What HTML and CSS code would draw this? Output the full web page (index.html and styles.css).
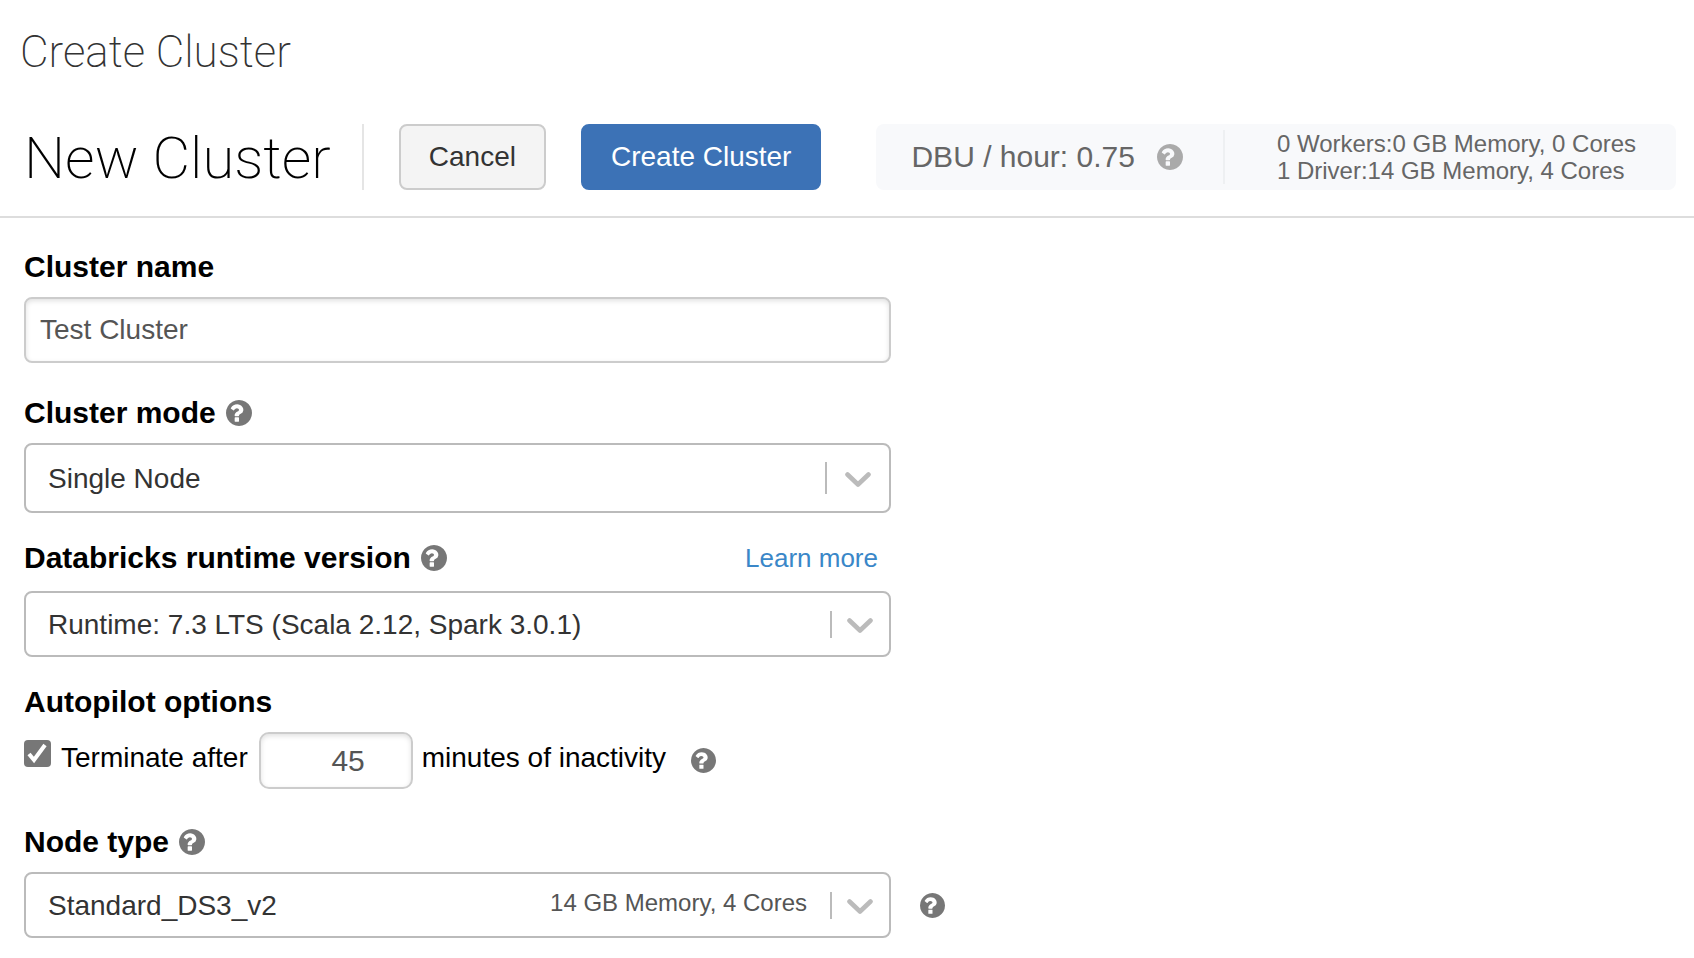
FILE: index.html
```html
<!DOCTYPE html>
<html lang="en">
<head>
<meta charset="utf-8">
<title>Create Cluster</title>
<link rel="stylesheet" href="styles.css">
</head>
<body>
<svg class="sprite" aria-hidden="true">
  <symbol id="question" viewBox="128 128 1536 1536"><path d="M896 1376v-192q0-14-9-23t-23-9h-192q-14 0-23 9t-9 23v192q0 14 9 23t23 9h192q14 0 23-9t9-23zm256-672q0-88-55.500-163t-138.500-116-170-41q-243 0-371 213-15 24 8 42l132 100q7 6 19 6 16 0 25-12 53-68 86-92 34-24 86-24 48 0 85.500 26t37.500 59q0 38-20 61t-68 45q-63 28-115.500 86.500t-52.500 125.500v36q0 14 9 23t23 9h192q14 0 23-9t9-23q0-19 21.500-49.500t54.500-49.500q32-18 49-28.500t46-35 44.500-48 28-60.500 12.500-81zm512 192q0 209-103 385.500t-279.500 279.500-385.500 103-385.500-103-279.500-279.500-103-385.500 103-385.500 279.500-279.500 385.500-103 385.500 103 279.500 279.500 103 385.500z"/></symbol>
  <symbol id="chevron" viewBox="0 0 26 16"><path d="M2.500 2.500 13 12.500 23.500 2.500" fill="none" stroke="currentColor" stroke-width="4.600" stroke-linecap="round" stroke-linejoin="round"/></symbol>
</svg>
<h1 class="page-title">Create Cluster</h1>
<header class="toolbar">
  <h2 class="toolbar-title">New Cluster</h2>
  <div class="actions">
    <button class="button" type="button">Cancel</button>
    <button class="button button-primary" type="submit" form="cluster-form">Create Cluster</button>
  </div>
  <div class="usage">
    <div class="usage-rate">DBU / hour: 0.75 <svg class="help help-light"><use href="#question"/></svg></div>
    <div class="usage-detail">0 Workers:0 GB Memory, 0 Cores<br>1 Driver:14 GB Memory, 4 Cores</div>
  </div>
</header>
<form class="cluster-form" id="cluster-form">
  <div class="field">
    <div class="field-head"><label for="name">Cluster name</label></div>
    <input class="text-input" id="name" type="text" value="Test Cluster">
  </div>
  <div class="field">
    <div class="field-head"><label for="mode">Cluster mode</label><svg class="help"><use href="#question"/></svg></div>
    <div class="select select-tall">
      <select id="mode"><option>Single Node</option></select>
      <div class="select-end"><svg class="chevron"><use href="#chevron"/></svg></div>
    </div>
  </div>
  <div class="field field-close">
    <div class="field-head field-head-loose"><label for="runtime">Databricks runtime version</label><svg class="help"><use href="#question"/></svg><a class="learn-more" href="#">Learn more</a></div>
    <div class="select">
      <select id="runtime"><option>Runtime: 7.3 LTS (Scala 2.12, Spark 3.0.1)</option></select>
      <div class="select-end"><svg class="chevron"><use href="#chevron"/></svg></div>
    </div>
  </div>
  <div class="field field-close">
    <div class="field-head">Autopilot options</div>
    <div class="autopilot">
      <input class="checkbox" id="terminate" type="checkbox" checked>
      <label for="terminate">Terminate after</label>
      <input class="text-input minutes-input" id="minutes" type="text" value="45">
      <label for="minutes">minutes of inactivity</label>
      <svg class="help help-small"><use href="#question"/></svg>
    </div>
  </div>
  <div class="field field-apart">
    <div class="field-head"><label for="node">Node type</label><svg class="help"><use href="#question"/></svg></div>
    <div class="node-row">
      <div class="select">
        <select id="node"><option>Standard_DS3_v2</option></select>
        <div class="select-end"><span class="select-note">14 GB Memory, 4 Cores</span><svg class="chevron"><use href="#chevron"/></svg></div>
      </div>
      <svg class="help help-small"><use href="#question"/></svg>
    </div>
  </div>
</form>
</body>
</html>
```
FILE: styles.css
```css
* { box-sizing: border-box; }
body {
  margin: 0;
  padding-bottom: 16px;
  background: #fff;
  color: #000;
  font: 28px/36px "Liberation Sans", Arial, sans-serif;
}
.sprite { position: absolute; width: 0; height: 0; }
input, select, button { font: inherit; }

.page-title {
  margin: 0;
  padding: 24px 20px 44px;
  color: #333;
  font: 200 44px/56px Roboto, "Liberation Sans", sans-serif;
}
.toolbar {
  display: flex;
  align-items: center;
  padding: 0 18px 26px 24px;
  border-bottom: 2px solid #ddd;
}
.toolbar-title {
  margin: 0;
  padding: 2px 31px 0 0;
  white-space: nowrap;
  font: 200 58px/64px Roboto, "Liberation Sans", sans-serif;
}
.actions {
  display: flex;
  gap: 35px;
  padding-left: 35px;
  border-left: 2px solid #e5e5e5;
}
.button {
  height: 66px;
  padding: 0 28px;
  border: 2px solid #ccc;
  border-radius: 8px;
  background: #f4f4f4;
  color: #333;
  white-space: nowrap;
}
.button-primary { border-color: #3c72b6; background: #3c72b6; color: #fff; }
.usage {
  flex: 1;
  display: flex;
  align-items: center;
  height: 66px;
  margin-left: 55px;
  border-radius: 8px;
  background: #f8f9fb;
  color: #666;
  white-space: nowrap;
}
.usage-rate {
  display: flex;
  align-items: center;
  gap: 22px;
  padding: 0 40px 0 35px;
  font-size: 30px;
  line-height: 54px;
}
.usage-detail {
  padding: 0 24px 0 52px;
  border-left: 2px solid #eef0f2;
  font-size: 24px;
  line-height: 27px;
}
.help { flex: none; width: 26px; height: 26px; fill: #777; }
.help-light { fill: #aaa; }
.help-small { width: 25px; height: 25px; }

.cluster-form { max-width: 891px; padding: 31px 0 0 24px; }
.field + .field { margin-top: 32px; }
.field + .field-close { margin-top: 27px; }
.field + .field-apart { margin-top: 35px; }
.field-head {
  display: flex;
  align-items: center;
  gap: 10px;
  margin-bottom: 12px;
  font-size: 30px;
  font-weight: bold;
}
.field-head-loose { margin-bottom: 15px; }
.learn-more {
  margin-left: auto;
  padding-right: 13px;
  color: #3a87c8;
  font-size: 26px;
  font-weight: normal;
  text-decoration: none;
}
.text-input {
  display: block;
  width: 100%;
  height: 66px;
  padding: 0 14px;
  border: 2px solid #ccc;
  border-radius: 8px;
  background: #fff;
  box-shadow: inset 0 2px 5px rgba(0, 0, 0, .12);
  color: #555;
}
.select { position: relative; width: 100%; }
.select select {
  display: block;
  width: 100%;
  height: 66px;
  padding: 2px 22px 0;
  border: 2px solid #bbb;
  border-radius: 8px;
  background: #fff;
  color: #333;
  appearance: none;
}
.select-tall select { height: 70px; }
.select-end {
  position: absolute;
  top: 0;
  right: 18px;
  bottom: 0;
  display: flex;
  align-items: center;
  pointer-events: none;
}
.select-end::after { content: ""; order: 1; width: 2px; height: 27px; background: #bbb; }
.select-tall .select-end { right: 20px; }
.select-tall .select-end::after { height: 32px; }
.select-note { order: 0; margin-right: 23px; padding-bottom: 4px; color: #555; font-size: 24px; }
.chevron { order: 2; width: 26px; height: 16px; margin: 3px 0 0 15px; color: #bbb; }
.select-tall .chevron { margin-left: 18px; }

.autopilot { display: flex; align-items: center; }
.autopilot label { padding-bottom: 6px; }
.checkbox {
  width: 27px;
  height: 27px;
  margin: 0 10px 14px 0;
  border-radius: 4px;
  appearance: none;
  background: #777 url("data:image/svg+xml,%3Csvg xmlns='http://www.w3.org/2000/svg' viewBox='0 0 27 27'%3E%3Cpath d='M5 14l5 6L21 5' fill='none' stroke='white' stroke-width='4'/%3E%3C/svg%3E") center / 100%;
}
.minutes-input {
  width: 154px;
  height: 57px;
  margin: 0 9px 0 11px;
  border-radius: 10px;
  padding: 0 46px;
  font-size: 30px;
  text-align: right;
}
.autopilot .help { margin-left: 25px; }
.node-row { display: grid; grid-template-columns: 100% 25px; gap: 29px; align-items: center; }
```
